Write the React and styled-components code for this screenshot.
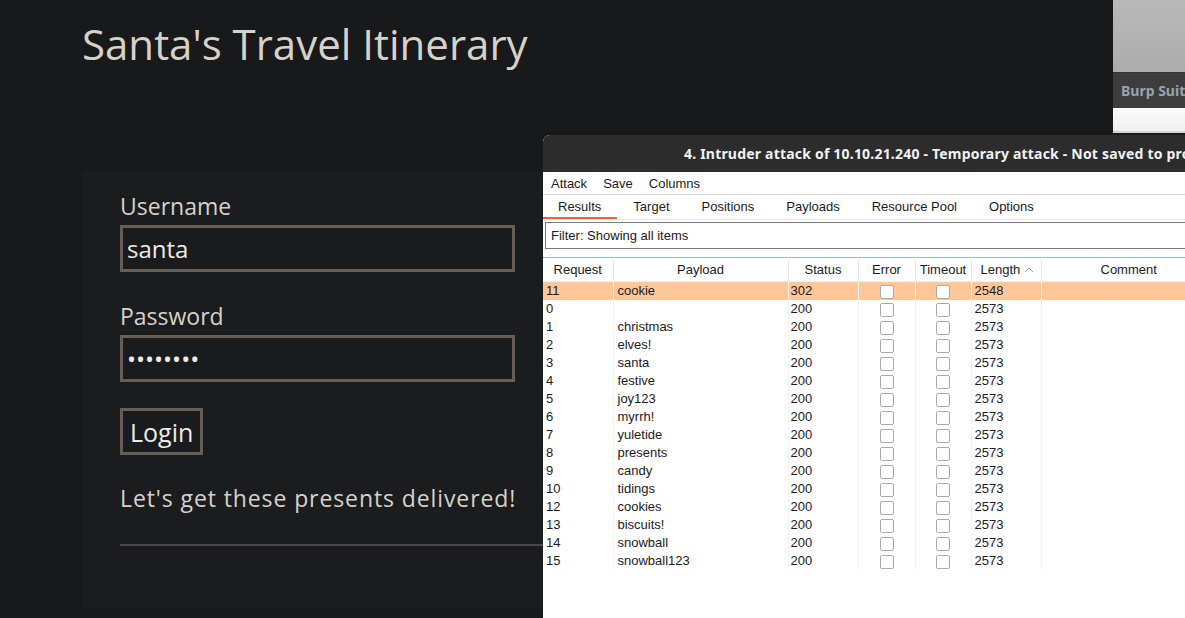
import React from 'react'
import styled, { createGlobalStyle } from 'styled-components'

const GlobalStyle = createGlobalStyle`
    html, body {
        margin: 0;
        padding: 0;
        background: #18191b;
        overflow: hidden;
    }
`

const results = [
    { id: 11, payload: 'cookie', status: 302, length: 2548, hit: true },
    { id: 0, payload: '', status: 200, length: 2573 },
    { id: 1, payload: 'christmas', status: 200, length: 2573 },
    { id: 2, payload: 'elves!', status: 200, length: 2573 },
    { id: 3, payload: 'santa', status: 200, length: 2573 },
    { id: 4, payload: 'festive', status: 200, length: 2573 },
    { id: 5, payload: 'joy123', status: 200, length: 2573 },
    { id: 6, payload: 'myrrh!', status: 200, length: 2573 },
    { id: 7, payload: 'yuletide', status: 200, length: 2573 },
    { id: 8, payload: 'presents', status: 200, length: 2573 },
    { id: 9, payload: 'candy', status: 200, length: 2573 },
    { id: 10, payload: 'tidings', status: 200, length: 2573 },
    { id: 12, payload: 'cookies', status: 200, length: 2573 },
    { id: 13, payload: 'biscuits!', status: 200, length: 2573 },
    { id: 14, payload: 'snowball', status: 200, length: 2573 },
    { id: 15, payload: 'snowball123', status: 200, length: 2573 }
]

const tabs = ['Results', 'Target', 'Positions', 'Payloads', 'Resource Pool', 'Options']

const Desktop = styled.div`
    position: relative;
    width: 1185px;
    height: 618px;
    overflow: hidden;
    background: #18191b;
    font-family: "Open Sans", "Noto Sans", sans-serif;
`

/* ---- the web page ---- */

const Title = styled.h1`
    margin: 0;
    padding: 16px 0 0 82px;
    font-size: 42px;
    font-weight: 400;
    line-height: 56px;
    color: #d6d2ca;
`

const Card = styled.main`
    margin: 98px 0 0 82px;
    width: 640px;
    height: 437px;
    background: #1b1c1e;
    padding: 20px 0 0 38px;
    box-sizing: border-box;
`

const Label = styled.div`
    font-size: 23px;
    line-height: 32px;
    color: #d6d2ca;
`

const Field = styled.input`
    display: block;
    box-sizing: border-box;
    width: 395px;
    height: 47px;
    margin: 3px 0 ${p => p.$gap}px 0;
    padding: 0 4px;
    background: #1a1b1d;
    border: 3px solid #665e54;
    color: #ecebe8;
    font-family: "Open Sans", sans-serif;
    font-size: 24px;
    outline: none;
`

const LoginButton = styled.button`
    display: block;
    box-sizing: border-box;
    height: 47px;
    padding: 0 7px;
    background: #1a1b1d;
    border: 3px solid #665e54;
    color: #ecebe8;
    font-family: "Open Sans", sans-serif;
    font-size: 25px;
`

const Tagline = styled.p`
    margin: 27px 0 0 0;
    font-size: 23px;
    letter-spacing: 0.9px;
    line-height: 32px;
    color: #d6d2ca;
`

const Rule = styled.hr`
    margin: 30px 0 0 0;
    border: none;
    height: 2px;
    background: #48484a;
`

/* ---- burp suite main window, behind ---- */

const BurpBack = styled.div`
    position: absolute;
    left: 1113px;
    top: 0;
    width: 90px;
    height: 133px;
    display: flex;
    flex-direction: column;
`

const BurpTop = styled.div`
    height: 72px;
    background: linear-gradient(#b9b9b9, #acacac);
`

const BurpBar = styled.div`
    height: 36px;
    background: #3d3d3d;
    border-top: 1px solid #333;
    box-sizing: border-box;
    padding-left: 8px;
    display: flex;
    align-items: center;
    font-family: "Noto Sans", sans-serif;
    font-weight: 700;
    font-size: 14px;
    color: #97a3ad;
    white-space: nowrap;
`

const BurpBody = styled.div`
    flex: 1;
    background: linear-gradient(#fbfbfb, #f0f0f0);
    border-bottom: 2px solid #d4d4d4;
`

/* ---- intruder attack window ---- */

const Window = styled.section`
    position: absolute;
    left: 543px;
    top: 135px;
    width: 720px;
    height: 500px;
    background: #fff;
    border-radius: 7px 7px 0 0;
    overflow: hidden;
    font-family: "Liberation Sans", Arial, sans-serif;
    font-size: 13px;
    color: #1a1a1a;
`

const TitleBar = styled.div`
    height: 37px;
    background: #2c2c2c;
    display: flex;
    align-items: center;
    padding-left: 141px;
    font-family: "Noto Sans", sans-serif;
    font-weight: 700;
    font-size: 14px;
    letter-spacing: 0.2px;
    color: #f2f2f2;
    white-space: nowrap;
`

const MenuBar = styled.div`
    height: 22px;
    display: flex;
    align-items: center;
    gap: 16px;
    padding-left: 8px;
    border-bottom: 1px solid #d6d6d6;
`

const TabRow = styled.div`
    height: 24px;
    display: flex;
    border-bottom: 1px solid #e4e4e4;
`

const Tab = styled.div`
    display: flex;
    align-items: center;
    padding: 0 16px;
    &:first-child {
        padding-left: 15px;
    }
    border-bottom: 2px solid ${p => (p.$active ? '#f06232' : 'transparent')};
`

const Filter = styled.div`
    margin: 2px 0 0 2px;
    height: 27px;
    border: 1px solid #7a7a7a;
    box-sizing: border-box;
    display: flex;
    align-items: center;
    padding-left: 5px;
`

const Table = styled.table`
    margin-top: 8px;
    border-collapse: collapse;
    table-layout: fixed;
    width: 720px;
    border-top: 1px solid #8fb4e3;
`

const HeadCell = styled.th`
    height: 23px;
    padding: 0;
    font-weight: 400;
    text-align: ${p => p.$align || 'center'};
    padding-left: ${p => p.$indent || 0}px;
    border-right: 1px solid #e8e8e8;
    border-bottom: 1px solid #f1f1f1;
`

const Row = styled.tr`
    height: 18px;
    background: ${p => (p.$hit ? '#ffc698' : '#fff')};
`

const Cell = styled.td`
    padding: 0 0 0 ${p => p.$indent ?? 3}px;
    line-height: 18px;
    text-align: ${p => p.$align || 'left'};
    border-right: 1px solid #f2f2f2;
    white-space: nowrap;
`

const Check = styled.span`
    display: inline-block;
    width: 12px;
    height: 12px;
    margin-top: 3px;
    border: 1px solid #a9a9a9;
    border-radius: 2px;
    background: #fff;
    vertical-align: top;
`

const SortArrow = () => (
    <svg width="10" height="7" viewBox="0 0 10 7" style={{ marginLeft: 4, verticalAlign: 1 }}>
        <path d="M1 6 L5 2 L9 6" fill="none" stroke="#9a9a9a" strokeWidth="1" />
    </svg>
)

export default function App() {
    return (
        <Desktop>
            <GlobalStyle />
            <Title>Santa's Travel Itinerary</Title>
            <Card>
                <Label>Username</Label>
                <Field $gap={28} defaultValue="santa" readOnly />
                <Label>Password</Label>
                <Field $gap={26} type="password" defaultValue="cookie12" readOnly />
                <LoginButton>Login</LoginButton>
                <Tagline>Let's get these presents delivered!</Tagline>
                <Rule />
            </Card>

            <BurpBack>
                <BurpTop />
                <BurpBar>Burp Suite</BurpBar>
                <BurpBody />
            </BurpBack>

            <Window>
                <TitleBar>4. Intruder attack of 10.10.21.240 - Temporary attack - Not saved to project file</TitleBar>
                <MenuBar>
                    <span>Attack</span>
                    <span>Save</span>
                    <span>Columns</span>
                </MenuBar>
                <TabRow>
                    {tabs.map((t, i) => (
                        <Tab key={t} $active={i === 0}>{t}</Tab>
                    ))}
                </TabRow>
                <Filter>Filter: Showing all items</Filter>
                <Table>
                    <colgroup>
                        <col style={{ width: 70 }} />
                        <col style={{ width: 175 }} />
                        <col style={{ width: 70 }} />
                        <col style={{ width: 57 }} />
                        <col style={{ width: 56 }} />
                        <col style={{ width: 70 }} />
                        <col />
                    </colgroup>
                    <thead>
                        <tr>
                            <HeadCell>Request</HeadCell>
                            <HeadCell>Payload</HeadCell>
                            <HeadCell>Status</HeadCell>
                            <HeadCell>Error</HeadCell>
                            <HeadCell>Timeout</HeadCell>
                            <HeadCell $align="left" $indent={9}>Length<SortArrow /></HeadCell>
                            <HeadCell $align="left" $indent={59}>Comment</HeadCell>
                        </tr>
                    </thead>
                    <tbody>
                        {results.map(r => (
                            <Row key={r.id} $hit={r.hit}>
                                <Cell>{r.id}</Cell>
                                <Cell $indent={4}>{r.payload}</Cell>
                                <Cell $indent={2}>{r.status}</Cell>
                                <Cell $indent={0} $align="center"><Check /></Cell>
                                <Cell $indent={0} $align="center"><Check /></Cell>
                                <Cell>{r.length}</Cell>
                                <Cell />
                            </Row>
                        ))}
                    </tbody>
                </Table>
            </Window>
        </Desktop>
    )
}
